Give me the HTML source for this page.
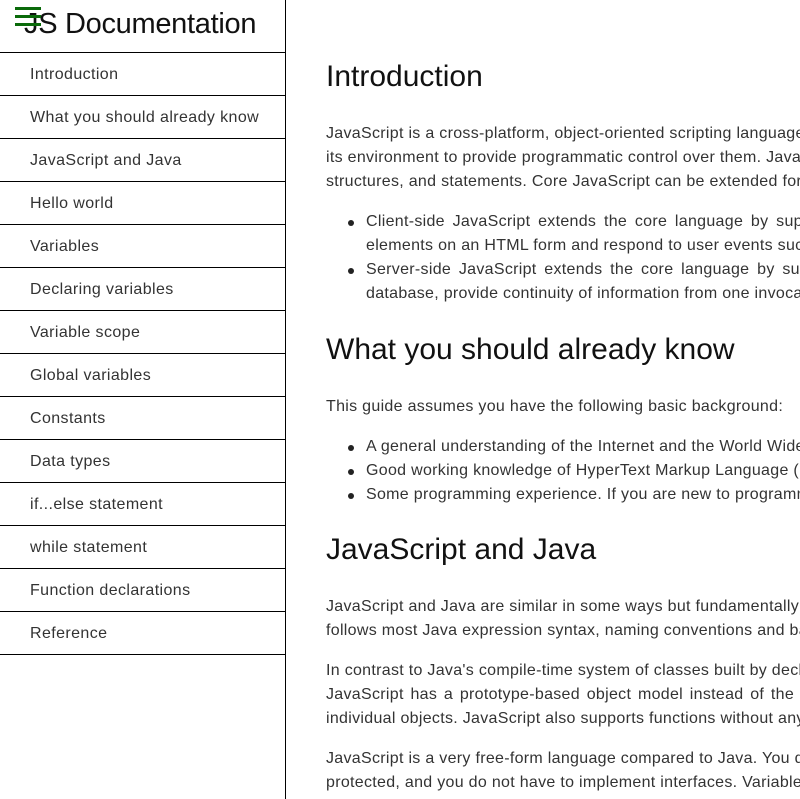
<!DOCTYPE html>
<html><head><meta charset="utf-8"><style>
html,body{margin:0;padding:0;width:800px;height:799px;overflow:hidden;background:#fff;font-family:"Liberation Sans",sans-serif;color:#222}
#nav{position:absolute;left:0;top:0;width:285px;height:799px;border-right:1px solid #000;background:#fff}
#nav header{height:53px;border-bottom:1px solid #000;position:relative;box-sizing:border-box}
#nav header h1{margin:0;position:absolute;left:24px;top:8px;font-size:29px;font-weight:normal;color:#111;letter-spacing:-0.3px}
.bar{position:absolute;left:15px;width:26px;height:3px;background:#0a6a0a;z-index:2}
#nav a{display:block;height:43px;line-height:43px;border-bottom:1px solid #000;box-sizing:border-box;padding-left:30px;font-size:16px;color:#333;text-decoration:none;letter-spacing:0.4px}
#main{position:absolute;left:326px;top:0;width:474px;height:799px;overflow:hidden;font-size:16px;color:#333}
.l{position:absolute;white-space:nowrap;line-height:24px;letter-spacing:0.3px}
h2{position:absolute;margin:0;font-weight:normal;font-size:30px;color:#111;white-space:nowrap}
.li{left:40px}
.b::before{content:"";position:absolute;left:-18px;top:10px;width:6px;height:6px;border-radius:50%;background:#222}
</style></head><body>
<div id="nav">
<header><div class="bar" style="top:7px"></div><div class="bar" style="top:15px"></div><div class="bar" style="top:23px"></div><h1>JS Documentation</h1></header>
<a>Introduction</a><a>What you should already know</a><a>JavaScript and Java</a><a>Hello world</a><a>Variables</a><a>Declaring variables</a><a>Variable scope</a><a>Global variables</a><a>Constants</a><a>Data types</a><a>if...else statement</a><a>while statement</a><a>Function declarations</a><a>Reference</a>
</div>
<div id="main">
<h2 style="top:60px">Introduction</h2>
<div class="l" style="top:122px">JavaScript is a cross-platform, object-oriented scripting language. It is a small and lightweight language.</div>
<div class="l" style="top:146px">its environment to provide programmatic control over them. JavaScript contains a standard library of objects,</div>
<div class="l" style="top:170px">structures, and statements. Core JavaScript can be extended for a variety of purposes by supplementing it</div>
<div class="l li b" style="top:210px;word-spacing:3px">Client-side JavaScript extends the core language by supplying objects to control a browser</div>
<div class="l li" style="top:234px">elements on an HTML form and respond to user events such as mouse clicks, form input, and page navigation.</div>
<div class="l li b" style="top:258px;word-spacing:3px">Server-side JavaScript extends the core language by supplying objects relevant to running</div>
<div class="l li" style="top:282px">database, provide continuity of information from one invocation to another of the application.</div>
<h2 style="top:333px">What you should already know</h2>
<div class="l" style="top:395px">This guide assumes you have the following basic background:</div>
<div class="l li b" style="top:435px">A general understanding of the Internet and the World Wide Web (WWW).</div>
<div class="l li b" style="top:459px">Good working knowledge of HyperText Markup Language (HTML).</div>
<div class="l li b" style="top:483px">Some programming experience. If you are new to programming, try one of the tutorials.</div>
<h2 style="top:533px">JavaScript and Java</h2>
<div class="l" style="top:595px">JavaScript and Java are similar in some ways but fundamentally different in some others.</div>
<div class="l" style="top:619px">follows most Java expression syntax, naming conventions and basic control-flow constructs.</div>
<div class="l" style="top:659px">In contrast to Java's compile-time system of classes built by declarations, JavaScript supports</div>
<div class="l" style="top:683px;word-spacing:2px">JavaScript has a prototype-based object model instead of the more common class-based</div>
<div class="l" style="top:707px">individual objects. JavaScript also supports functions without any special declarative requirements.</div>
<div class="l" style="top:747px">JavaScript is a very free-form language compared to Java. You do not have to declare all variables,</div>
<div class="l" style="top:771px">protected, and you do not have to implement interfaces. Variables, parameters, and function return types</div>
</div>
</body></html>
